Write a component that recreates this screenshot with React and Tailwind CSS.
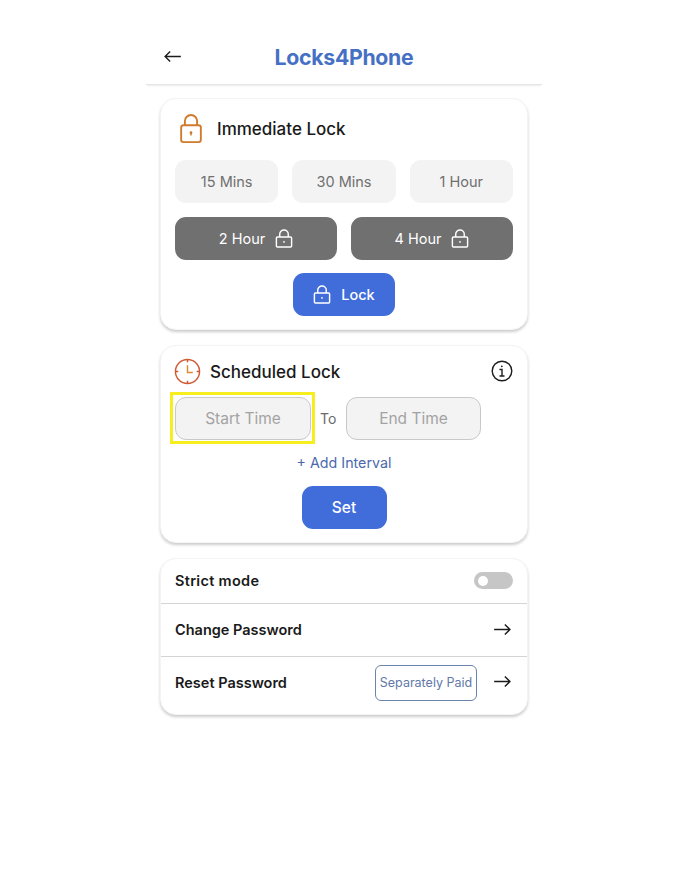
const font = { fontFamily: 'Inter, sans-serif' };

const LockIcon = ({ className = 'w-[18px] h-[19px]' }) => (
  <svg viewBox="0 0 18 20" fill="none" stroke="currentColor" strokeWidth="1.5" className={className}>
    <rect x="1" y="8.500" width="16" height="10.500" rx="1" />
    <path d="M4.500 8.500V5.500a4.500 4.500 0 0 1 9 0v3" />
    <path d="M9 12.500v2" />
  </svg>
);

const ArrowRight = () => (
  <svg viewBox="0 0 20 14" fill="none" stroke="#1c1c1c" strokeWidth="1.5" className="w-[19px] h-[13px]">
    <path d="M1 7h17M12.500 1.500 18 7l-5.500 5.500" />
  </svg>
);

const Card = ({ className, children }) => (
  <div className={`bg-white rounded-[16px] border border-[#f4f4f4] shadow-[0_2px_3px_rgba(0,0,0,0.2)] ${className}`}>
    {children}
  </div>
);

const App = () => {
  return (
    <div className="w-[700px] h-[880px] bg-white" style={font}>
      <div className="ml-[146px] w-[396px]">
        <div className="relative h-[85px] flex items-center justify-center border-b border-[#e6e6e6] shadow-[0_2px_2px_-1px_rgba(0,0,0,0.08)] pt-[31px]">
          <svg viewBox="0 0 20 14" fill="none" stroke="#1c1c1c" strokeWidth="1.5" className="absolute left-[17px] top-[50px] w-[19px] h-[13px]">
            <path d="M19 7H2M7.500 1.500 2 7l5.500 5.500" />
          </svg>
          <span className="text-[21.250px] font-bold text-[#4670c4] tracking-[-0.3px]">Locks4Phone</span>
        </div>

        <div className="mx-[14px] mt-[13px] flex flex-col gap-[15px]">
          <Card className="h-[232px] px-[14px] pt-[14px]">
            <div className="flex items-center gap-[14px] h-[32px] pl-[4px]">
              <svg viewBox="0 0 24 32" fill="none" stroke="#d27a2c" strokeWidth="2" className="w-[24px] h-[30px]">
                <rect x="1.500" y="12" width="21" height="18" rx="2.500" />
                <path d="M5.500 12V7.500a6.500 6.500 0 0 1 13 0V12" />
                <circle cx="12" cy="20" r="1.500" fill="#d27a2c" stroke="none" />
                <path d="M12 20v3" strokeWidth="1.500" />
              </svg>
              <span className="text-[17px] font-medium text-[#1a1a1a] pt-[2px]">Immediate Lock</span>
            </div>
            <div className="mt-[15px] flex gap-[14px]">
              {['15 Mins', '30 Mins', '1 Hour'].map((t) => (
                <div key={t} className="flex-1 h-[43px] rounded-[11px] bg-[#f3f3f3] flex items-center justify-center text-[14.500px] text-[#6f6f6f]">
                  {t}
                </div>
              ))}
            </div>
            <div className="mt-[14px] flex gap-[14px]">
              {['2 Hour', '4 Hour'].map((t) => (
                <div key={t} className="flex-1 h-[43px] rounded-[11px] bg-[#707070] flex items-center justify-center gap-[10px] text-[14.500px] text-white">
                  {t}
                  <LockIcon />
                </div>
              ))}
            </div>
            <div className="mt-[13px] flex justify-center">
              <div className="w-[102px] h-[43px] rounded-[11px] bg-[#416ddb] flex items-center justify-center gap-[10px] text-[14.500px] font-medium text-white">
                <LockIcon />
                Lock
              </div>
            </div>
          </Card>

          <Card className="h-[198px] px-[14px] pt-[11px]">
            <div className="flex items-center justify-between h-[28px]">
              <div className="flex items-center gap-[9px] -ml-[1px]">
                <svg viewBox="0 0 28 28" fill="none" stroke="#cf5a35" strokeWidth="1.500" className="w-[27px] h-[27px]">
                  <circle cx="14" cy="14" r="12.500" />
                  <path d="M14 1.500v3M14 23.500v3M1.500 14h3M23.500 14h3" />
                  <path d="M14 7.500V15h5.500" stroke="#e08a30" />
                </svg>
                <span className="text-[17px] font-medium text-[#1a1a1a] pt-[3px]">Scheduled Lock</span>
              </div>
              <svg viewBox="0 0 22 22" fill="none" stroke="#1c1c1c" strokeWidth="1.400" className="w-[22px] h-[22px]">
                <circle cx="11" cy="11" r="9.800" />
                <path d="M8.500 9.500H11V16M8.500 16h5" />
                <circle cx="10.800" cy="6.300" r="0.900" fill="#1c1c1c" stroke="none" />
              </svg>
            </div>
            <div className="mt-[12px] flex items-center">
              <div className="relative w-[136px] h-[43px] rounded-[11px] bg-[#f3f3f3] border border-[#c9c9c9] flex items-center justify-center text-[15.500px] text-[#a3a3a3]">
                Start Time
                <div className="absolute -left-[6px] -right-[5px] -top-[6px] -bottom-[5px] border-[3px] border-[#f6ee1f]" />
              </div>
              <span className="ml-[9px] w-[26px] text-[14px] text-[#6a6a6a]">To</span>
              <div className="w-[135px] h-[43px] rounded-[11px] bg-[#f3f3f3] border border-[#c9c9c9] flex items-center justify-center text-[15.500px] text-[#a3a3a3]">
                End Time
              </div>
            </div>
            <div className="mt-[13px] text-center text-[14.250px] leading-[20px] text-[#4a69ad]">+ Add Interval</div>
            <div className="mt-[13px] flex justify-center">
              <div className="w-[85px] h-[43px] rounded-[11px] bg-[#416ddb] flex items-center justify-center text-[15.500px] font-medium text-white">
                Set
              </div>
            </div>
          </Card>

          <Card className="h-[157px] flex flex-col text-[14.500px] font-semibold text-[#1a1a1a]">
            <div className="h-[45px] px-[14px] flex items-center justify-between border-b border-[#d4d4d4]">
              <span className="tracking-[0.3px]">Strict mode</span>
              <div className="w-[39px] h-[17px] -mt-[1px] rounded-full bg-[#c6c6c6] flex items-center pl-[4px]">
                <div className="w-[10px] h-[10px] rounded-full bg-white" />
              </div>
            </div>
            <div className="h-[53px] px-[14px] flex items-center justify-between border-b border-[#d4d4d4]">
              <span>Change Password</span>
              <span className="mr-[1px] -mt-[1px] flex"><ArrowRight /></span>
            </div>
            <div className="flex-1 px-[14px] pb-[5px] flex items-center justify-between">
              <span>Reset Password</span>
              <div className="flex items-center gap-[16px] mr-[1px]">
                <div className="w-[102px] h-[36px] rounded-[6px] border-[1.500px] border-[#6b84ab] flex items-center justify-center text-[12.500px] font-normal text-[#6178a8]">
                  Separately Paid
                </div>
                <span className="-mt-[3px] flex"><ArrowRight /></span>
              </div>
            </div>
          </Card>
        </div>
      </div>
    </div>
  );
};

export default App;
